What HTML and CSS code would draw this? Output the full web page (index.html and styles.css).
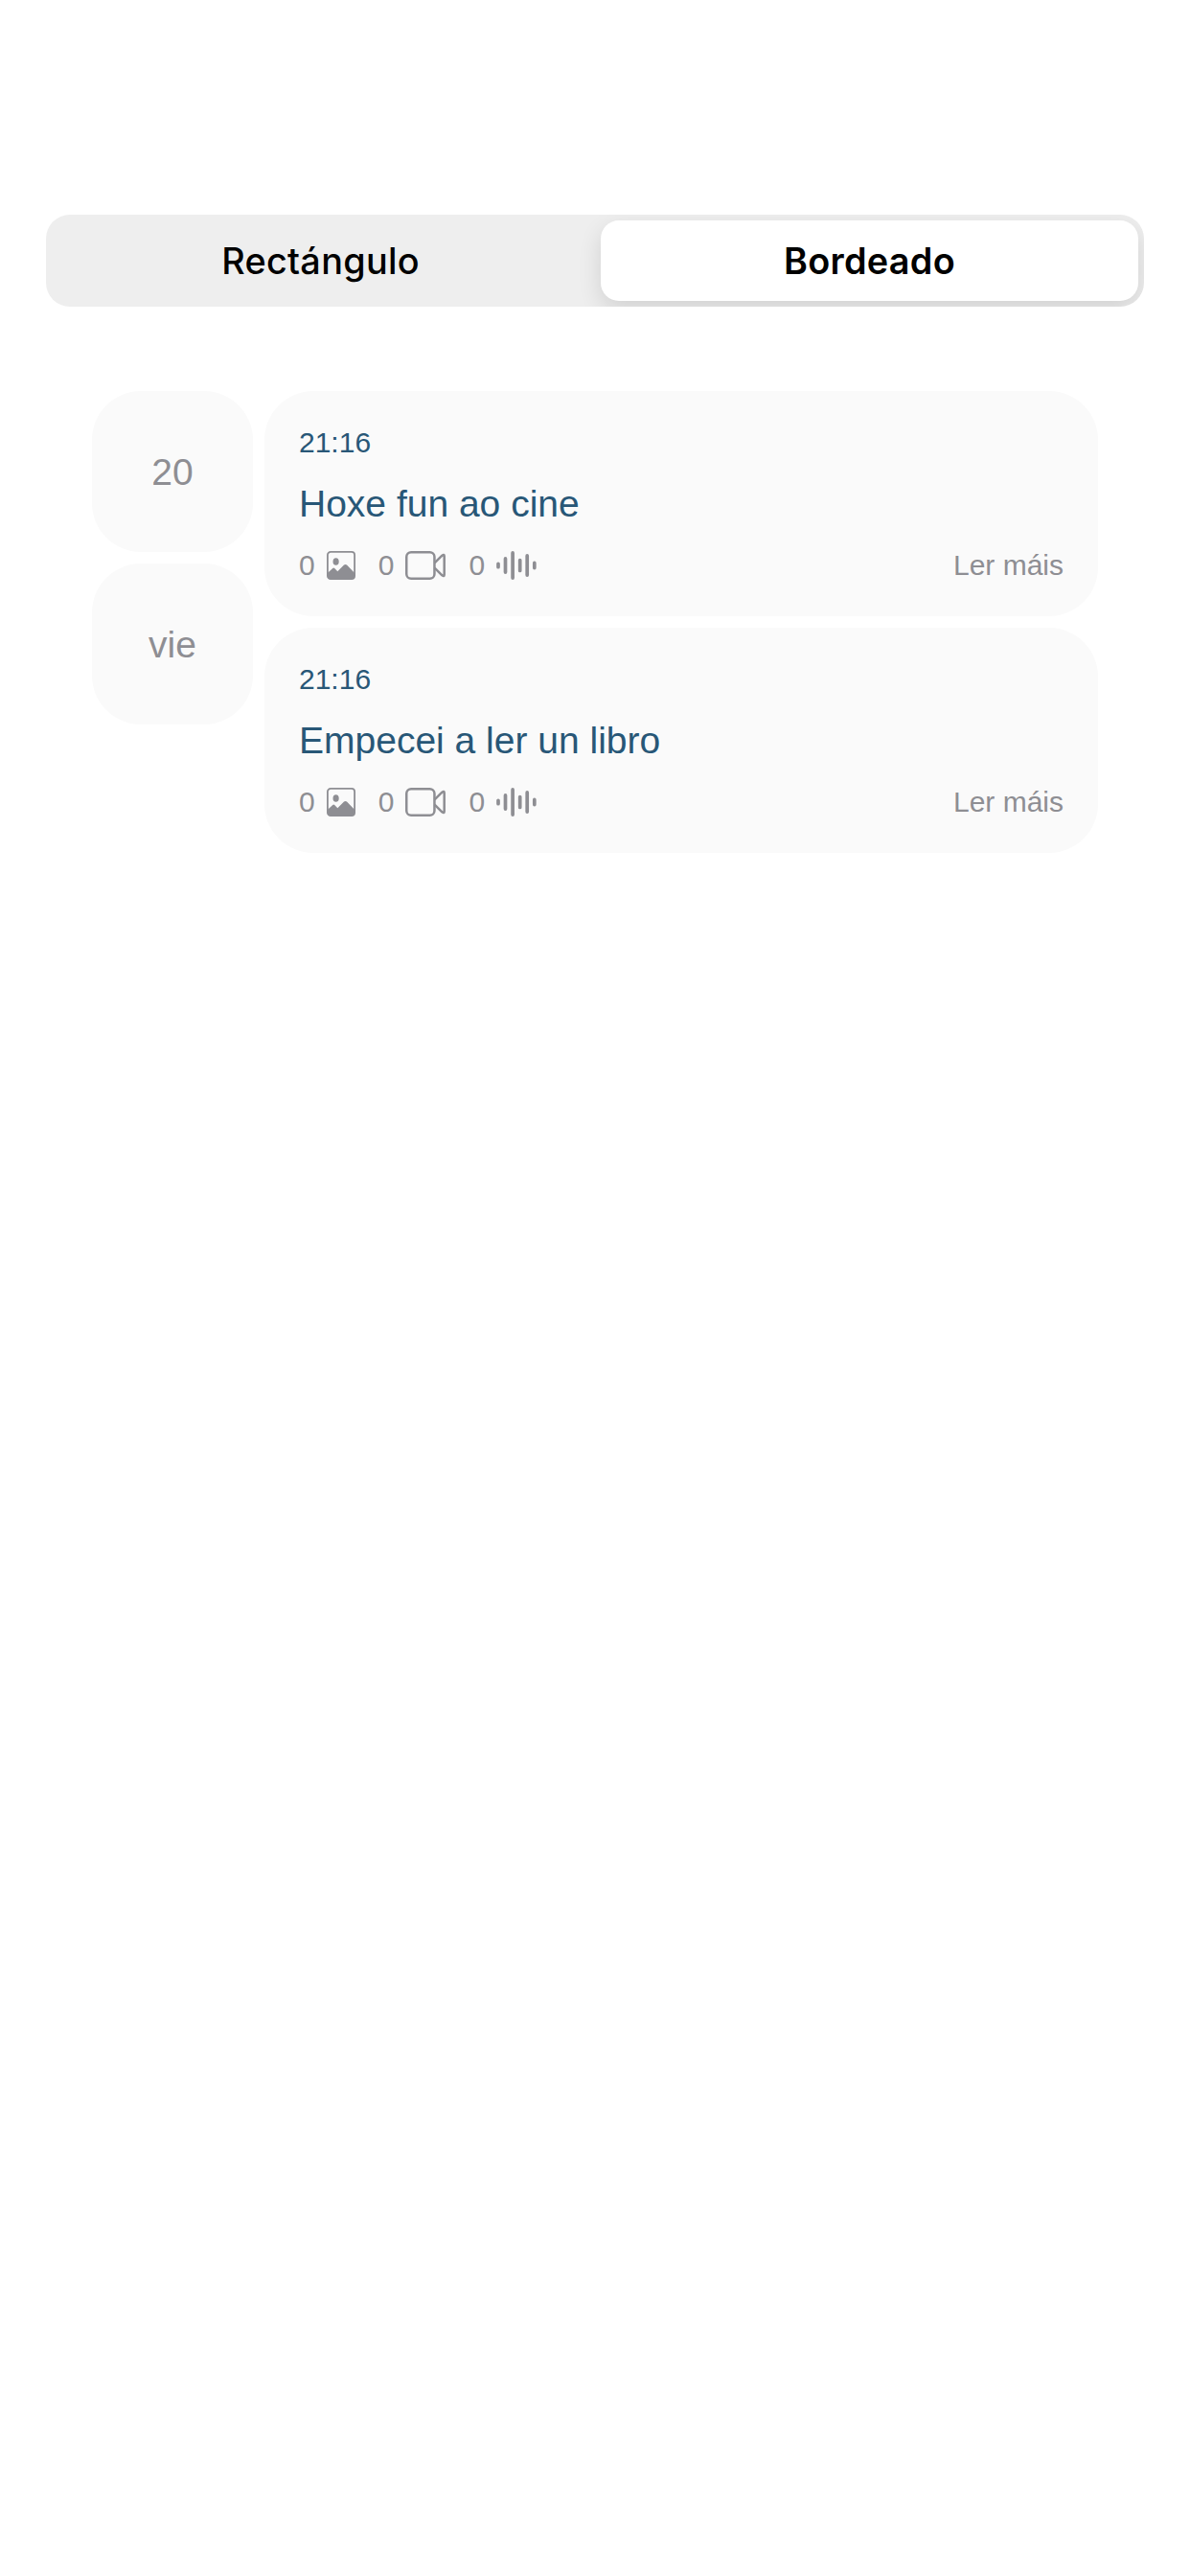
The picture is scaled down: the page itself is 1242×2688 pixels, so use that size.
FILE: index.html
```html
<!DOCTYPE html>
<html lang="gl">
<head>
<meta charset="utf-8">
<title>Diario</title>
<link rel="stylesheet" href="styles.css">
</head>
<body>
<svg class="sprite" aria-hidden="true">
  <symbol id="photo" viewBox="0 0 30 30">
    <rect x=".9" y=".9" width="28.2" height="28.2" rx="3.2" fill="none" stroke="currentColor" stroke-width="1.8"/>
    <ellipse cx="9.6" cy="11" rx="3.1" ry="3.8" fill="currentColor"/>
    <path d="M.8 23 6.2 17.9Q7.2 17.2 8.2 18L11.3 21.2 18 14.6Q19.5 13.2 21 14.6L29.2 23V26Q29.2 29.2 26 29.2H4Q.8 29.2 .8 26Z" fill="currentColor"/>
  </symbol>
  <symbol id="video" viewBox="0 0 42 30">
    <g fill="none" stroke="currentColor" stroke-width="2.5" stroke-linejoin="round">
      <rect x="1.25" y="1.25" width="29.2" height="27.5" rx="4.8"/>
      <path d="M30.6 12.4 38.4 4.7Q40.7 3 40.7 5.3V24.7Q40.7 27 38.4 25.3L30.6 17.6"/>
    </g>
  </symbol>
  <symbol id="wave" viewBox="0 0 42 30">
    <path d="M2 13.3V16.7M9.5 7.9V22.1M17.1 1.9V28.1M24.7 9.6V20.4M32.2 4.9V25.1M39.8 12.4V17.6" fill="none" stroke="currentColor" stroke-width="3.7" stroke-linecap="round"/>
  </symbol>
</svg>
<main class="screen">
  <div class="segmented">
    <button class="segment">Rectángulo</button>
    <button class="segment selected">Bordeado</button>
  </div>
  <section class="day">
    <div class="date">
      <div class="tile">20</div>
      <div class="tile">vie</div>
    </div>
    <div class="entries">
      <article class="entry">
        <div class="time">21:16</div>
        <div class="title">Hoxe fun ao cine</div>
        <div class="meta">
          <span class="count">0<svg class="photo"><use href="#photo"/></svg></span>
          <span class="count">0<svg class="video"><use href="#video"/></svg></span>
          <span class="count">0<svg class="wave"><use href="#wave"/></svg></span>
          <span class="more">Ler máis</span>
        </div>
      </article>
      <article class="entry">
        <div class="time">21:16</div>
        <div class="title">Empecei a ler un libro</div>
        <div class="meta">
          <span class="count">0<svg class="photo"><use href="#photo"/></svg></span>
          <span class="count">0<svg class="video"><use href="#video"/></svg></span>
          <span class="count">0<svg class="wave"><use href="#wave"/></svg></span>
          <span class="more">Ler máis</span>
        </div>
      </article>
    </div>
  </section>
</main>
</body>
</html>
```
FILE: styles.css
```css
* { box-sizing: border-box; }
body {
  margin: 0;
  background: #fff;
  font-family: "Liberation Sans", Arial, sans-serif;
}
.sprite { display: none; }
.screen {
  min-height: 2688px;
  padding: 224px 48px 0;
}
.segmented {
  display: flex;
  height: 96px;
  padding: 6px;
  gap: 12px;
  border-radius: 25px;
  background: #eee;
  overflow: hidden;
}
.segment {
  flex: 1;
  padding: 0;
  border: 0;
  border-radius: 19px;
  background: none;
  color: #000;
  font: 450 37.8px/84px Inter, sans-serif;
  letter-spacing: .3px;
}
.segment.selected {
  background: #fff;
  font-weight: 600;
  box-shadow: 0 9px 24px rgba(0, 0, 0, .12);
}
.day {
  display: flex;
  gap: 12px;
  margin: 88px 48px 0;
}
.date, .entries {
  display: flex;
  flex-direction: column;
  gap: 12px;
}
.tile {
  display: flex;
  align-items: center;
  justify-content: center;
  width: 168px;
  height: 168px;
  padding-top: 2px;
  border-radius: 51px;
  background: #fafafa;
  color: #8e8e93;
  font-size: 39px;
}
.entries { flex: 1; }
.entry {
  height: 235px;
  padding: 36px 36px 0;
  border-radius: 51px;
  background: #fafafa;
  color: #285777;
}
.time { font-size: 30px; line-height: 36px; }
.title { margin-top: 23px; font-size: 39px; line-height: 45px; }
.meta {
  display: flex;
  align-items: center;
  gap: 24px;
  height: 36px;
  margin-top: 24px;
  color: #8e8e93;
  font-size: 30px;
  line-height: 36px;
}
.count { display: flex; align-items: center; gap: 12px; }
.photo { width: 30px; height: 30px; }
.video, .wave { width: 42px; height: 30px; }
.more { margin-left: auto; }
```
